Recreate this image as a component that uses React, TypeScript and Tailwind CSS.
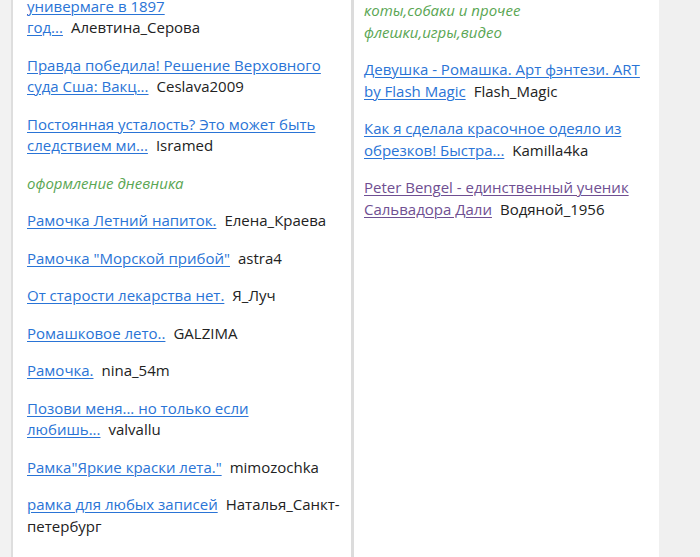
import React from 'react';

type Item = { title: string[]; author: string; tail?: string; visited?: boolean };
type Block = { kind: 'cat'; lines: string[] } | { kind: 'item'; item: Item };

const left: Block[] = [
  { kind: 'item', item: { title: ['Рождественская ёлка в', 'универмаге в 1897', 'год...'], author: 'Алевтина_Серова' } },
  { kind: 'item', item: { title: ['Правда победила! Решение Верховного', 'суда Сша: Вакц...'], author: 'Ceslava2009' } },
  { kind: 'item', item: { title: ['Постоянная усталость? Это может быть', 'следствием ми...'], author: 'Isramed' } },
  { kind: 'cat', lines: ['оформление дневника'] },
  { kind: 'item', item: { title: ['Рамочка Летний напиток.'], author: 'Елена_Краева' } },
  { kind: 'item', item: { title: ['Рамочка "Морской прибой"'], author: 'astra4' } },
  { kind: 'item', item: { title: ['От старости лекарства нет.'], author: 'Я_Луч' } },
  { kind: 'item', item: { title: ['Ромашковое лето..'], author: 'GALZIMA' } },
  { kind: 'item', item: { title: ['Рамочка.'], author: 'nina_54m' } },
  { kind: 'item', item: { title: ['Позови меня... но только если', 'любишь...'], author: 'valvallu' } },
  { kind: 'item', item: { title: ['Рамка"Яркие краски лета."'], author: 'mimozochka' } },
  { kind: 'item', item: { title: ['рамка для любых записей'], author: 'Наталья_Санкт-', tail: 'петербург' } },
  { kind: 'item', item: { title: ['Рамочка "Ангелочки"'], author: 'Надежда' } },
];

const right: Block[] = [
  { kind: 'cat', lines: ['коты,собаки и прочее', 'флешки,игры,видео'] },
  { kind: 'item', item: { title: ['Девушка - Ромашка. Арт фэнтези. ART', 'by Flash Magic'], author: 'Flash_Magic' } },
  { kind: 'item', item: { title: ['Как я сделала красочное одеяло из', 'обрезков! Быстра...'], author: 'Kamilla4ka' } },
  { kind: 'item', item: { title: ['Peter Bengel - единственный ученик', 'Сальвадора Дали'], author: 'Водяной_1956', visited: true } },
];

function Entry({ b }: { b: Block }) {
  if (b.kind === 'cat') {
    return (
      <div className="italic text-[#5aa653]">
        {b.lines.map((l) => (
          <div key={l}>{l}</div>
        ))}
      </div>
    );
  }
  const it = b.item;
  const link = it.visited ? 'text-[#6f4f92]' : 'text-[#2a74d6]';
  return (
    <div>
      {it.title.map((l, i) => (
        <div key={l} className="whitespace-nowrap">
          <a href="#" className={`${link} underline underline-offset-2 decoration-1`}>
            {l}
          </a>
          {i === it.title.length - 1 && <span className="ml-[8px] text-[#222]">{it.author}</span>}
        </div>
      ))}
      {it.tail && <div className="text-[#222]">{it.tail}</div>}
    </div>
  );
}

export default function App() {
  return (
    <div
      className="w-[700px] h-[557px] overflow-hidden bg-[#f0f0f0] flex text-[15px] leading-[21.5px]"
      style={{ fontFamily: '"Open Sans", "Noto Sans", sans-serif' }}
    >
      <div className="w-[11px] shrink-0 bg-[#f2f2f2]" />
      <div className="w-[2px] shrink-0 bg-[#dedede]" />
      <div className="w-[338px] shrink-0 bg-white pl-[14px] pr-[6px]">
        <div className="-mt-[26px] flex flex-col gap-[16px]">
          {left.map((b, i) => (
            <Entry key={i} b={b} />
          ))}
        </div>
      </div>
      <div className="w-[3px] shrink-0 bg-[#dcdcdc]" />
      <div className="w-[305px] shrink-0 bg-white pl-[10px]">
        <div className="flex flex-col gap-[16px]">
          {right.map((b, i) => (
            <Entry key={i} b={b} />
          ))}
        </div>
      </div>
      <div className="flex-1 bg-[#f0f0f0]" />
    </div>
  );
}
